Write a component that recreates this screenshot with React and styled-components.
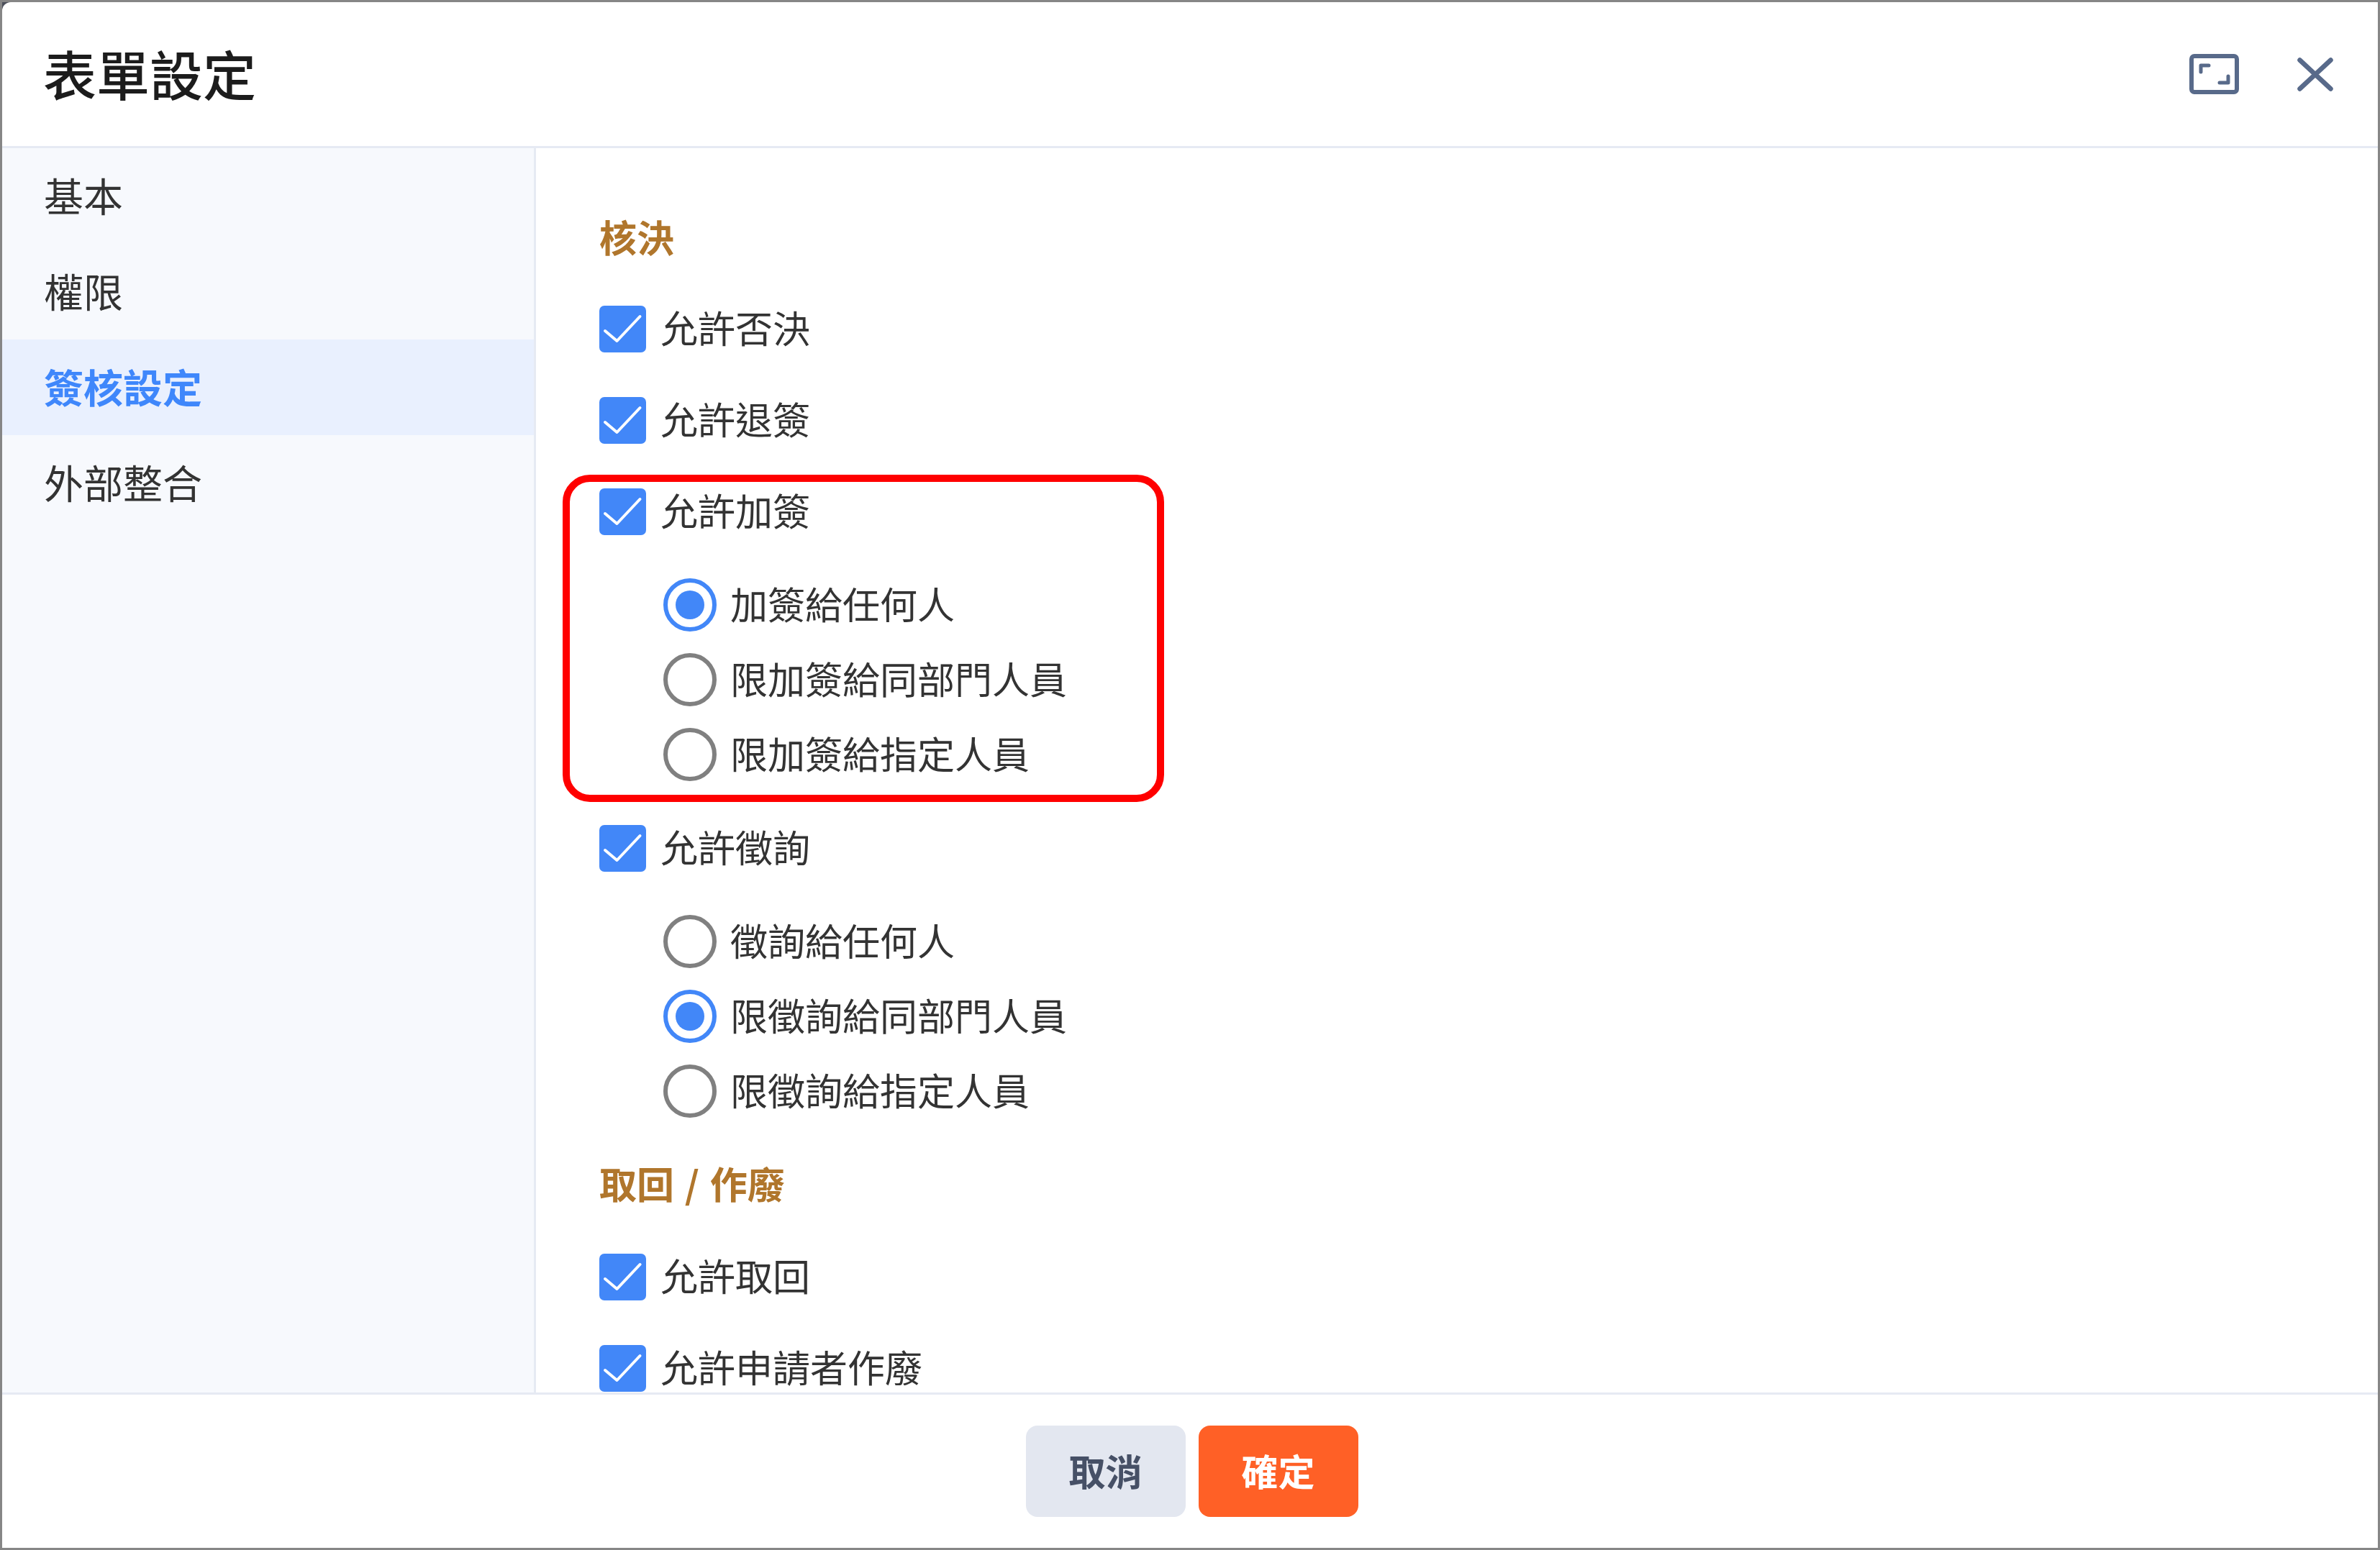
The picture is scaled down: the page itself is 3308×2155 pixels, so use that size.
import React from "react";
import styled, { createGlobalStyle } from "styled-components";

const GlobalStyle = createGlobalStyle`
  html, body {
    margin: 0;
    padding: 0;
    background: #fff;
  }
  * {
    box-sizing: border-box;
  }
`;

const NAV_ITEMS = ["基本", "權限", "簽核設定", "外部整合"];

function Checkbox({ label }) {
  return (
    <CheckRow>
      <CheckBox>
        <svg width="65" height="65" viewBox="0 0 65 65" fill="none">
          <path d="M8 35 L24.5 49 L56.5 15" stroke="#fff" strokeWidth="4" strokeLinecap="round" strokeLinejoin="round" />
        </svg>
      </CheckBox>
      <RowText>{label}</RowText>
    </CheckRow>
  );
}

function RadioOptions({ options, selected }) {
  return (
    <RadioGroup>
      {options.map((option, i) => (
        <RadioRow key={option}>
          <RadioCircle $checked={i === selected} />
          <RowText>{option}</RowText>
        </RadioRow>
      ))}
    </RadioGroup>
  );
}

export default function App() {
  return (
    <Frame>
      <GlobalStyle />
      <Dialog>
        <Header>
          <Title>表單設定</Title>
          <HeaderIcons>
            <svg width="69" height="56" viewBox="0 0 69 56" fill="none" stroke="#586a8a" strokeLinecap="round" strokeLinejoin="round">
              <rect x="3" y="3" width="63" height="50" rx="4" strokeWidth="6" />
              <path d="M16 25 V16 H27 M54 31 V40 H42" strokeWidth="5" />
            </svg>
            <svg width="50" height="47" viewBox="0 0 50 47" fill="none" stroke="#586a8a" strokeWidth="6.5" strokeLinecap="round">
              <path d="M3.5 3.5 L46.5 43.5 M46.5 3.5 L3.5 43.5" />
            </svg>
          </HeaderIcons>
        </Header>
        <Body>
          <Sidebar>
            {NAV_ITEMS.map((item) => (
              <NavItem key={item} $active={item === "簽核設定"}>
                {item}
              </NavItem>
            ))}
          </Sidebar>
          <Content>
            <SectionTitle>核決</SectionTitle>
            <Checkbox label="允許否決" />
            <Checkbox label="允許退簽" />
            <Highlight>
              <Checkbox label="允許加簽" />
              <RadioOptions
                options={["加簽給任何人", "限加簽給同部門人員", "限加簽給指定人員"]}
                selected={0}
              />
            </Highlight>
            <Checkbox label="允許徵詢" />
            <RadioOptions
              options={["徵詢給任何人", "限徵詢給同部門人員", "限徵詢給指定人員"]}
              selected={1}
            />
            <SectionTitle $tall>取回 / 作廢</SectionTitle>
            <Checkbox label="允許取回" />
            <Checkbox label="允許申請者作廢" />
          </Content>
        </Body>
        <Footer>
          <FooterButton>取消</FooterButton>
          <FooterButton $primary>確定</FooterButton>
        </Footer>
      </Dialog>
    </Frame>
  );
}

const Frame = styled.div`
  width: 3308px;
  height: 2155px;
  border: 3px solid #868686;
  background: #4c4f5a;
  font-family: "Noto Sans CJK TC", "Liberation Sans", sans-serif;
  color: #333;
`;

const Dialog = styled.div`
  width: 100%;
  height: 100%;
  display: flex;
  flex-direction: column;
  background: #fff;
  border-radius: 12px 0 0 0;
  overflow: hidden;
`;

const Header = styled.header`
  flex: 0 0 203px;
  display: flex;
  align-items: center;
  justify-content: space-between;
  padding: 0 62px 0 57px;
  border-bottom: 3px solid #e6eaf3;
`;

const Title = styled.h1`
  margin: 0;
  padding-bottom: 5px;
  font-size: 74px;
  font-weight: 500;
  line-height: 1;
  color: #1c1c1c;
`;

const HeaderIcons = styled.div`
  display: flex;
  align-items: center;
  gap: 81px;
`;

const Body = styled.div`
  flex: 1;
  min-height: 0;
  display: flex;
`;

const Sidebar = styled.nav`
  flex: 0 0 742px;
  background: #f7f9fd;
  border-right: 3px solid #e6eaf3;
`;

const NavItem = styled.div`
  height: 133px;
  display: flex;
  align-items: center;
  padding: 0 0 5px 58px;
  font-size: 55px;
  font-weight: ${(p) => (p.$active ? 700 : 400)};
  color: ${(p) => (p.$active ? "#3f87fb" : "#333")};
  background: ${(p) => (p.$active ? "#e9f0fe" : "transparent")};
`;

const Content = styled.main`
  flex: 1;
  min-width: 0;
  overflow: hidden;
  padding: 62px 0 0 88px;
`;

const SectionTitle = styled.h2`
  margin: 0;
  height: ${(p) => (p.$tall ? 128 : 126)}px;
  display: flex;
  align-items: center;
  padding-bottom: ${(p) => (p.$tall ? 7 : 5)}px;
  font-size: 52px;
  font-weight: 700;
  word-spacing: 3px;
  color: #b0762c;
`;

const CheckRow = styled.label`
  height: 127px;
  display: flex;
  align-items: center;
  gap: 20px;
  font-size: 52px;
`;

const RowText = styled.span`
  line-height: 1.1;
  padding-bottom: 5px;
`;

const CheckBox = styled.span`
  flex: 0 0 65px;
  height: 65px;
  border-radius: 7px;
  background: #4287f8;
  svg {
    display: block;
  }
`;

const Highlight = styled.div`
  position: relative;

  &::after {
    content: "";
    position: absolute;
    box-sizing: border-box;
    top: 12px;
    left: -51px;
    width: 836px;
    height: 455px;
    border: 10px solid #ff0000;
    border-radius: 38px;
    pointer-events: none;
  }
`;

const RadioGroup = styled.div`
  padding: 14px 0 15px 89px;
`;

const RadioRow = styled.label`
  height: 104px;
  display: flex;
  align-items: center;
  gap: 19px;
  font-size: 52px;
`;

const RadioCircle = styled.span`
  flex: 0 0 74px;
  height: 74px;
  border-radius: 50%;
  border: 6px solid ${(p) => (p.$checked ? "#4287f8" : "#808080")};
  display: flex;
  align-items: center;
  justify-content: center;

  &::before {
    content: "";
    display: ${(p) => (p.$checked ? "block" : "none")};
    width: 40px;
    height: 40px;
    border-radius: 50%;
    background: #4287f8;
  }
`;

const Footer = styled.footer`
  flex: 0 0 216px;
  display: flex;
  justify-content: center;
  gap: 18px;
  padding: 43px 0 0 5px;
  border-top: 3px solid #e6eaf3;
`;

const FooterButton = styled.button`
  width: 222px;
  height: 127px;
  border: none;
  border-radius: 16px;
  padding: 0 0 3px;
  font-family: inherit;
  font-size: 51px;
  font-weight: 700;
  background: ${(p) => (p.$primary ? "#ff6026" : "#e3e7f0")};
  color: ${(p) => (p.$primary ? "#fff" : "#465066")};
`;
